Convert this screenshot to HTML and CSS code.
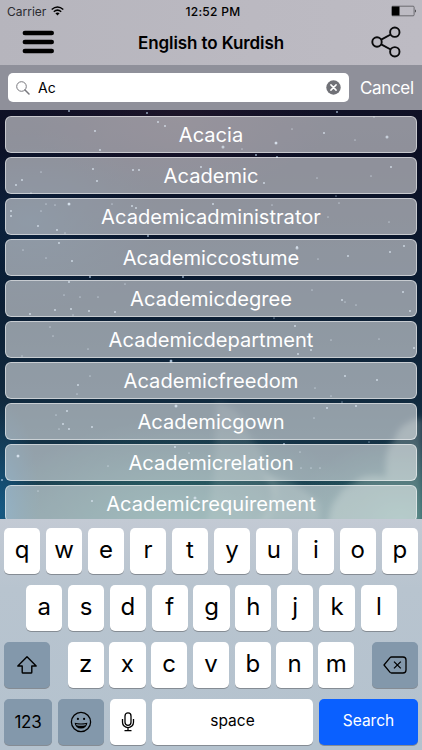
FILE: index.html
```
<!DOCTYPE html>
<html lang="en">
<head>
<meta charset="utf-8">
<title>English to Kurdish</title>
<link rel="stylesheet" href="styles.css">
</head>
<body>
<div class="phone">
  <svg class="sky" viewBox="0 0 422 750" aria-hidden="true">
    <defs>
      <linearGradient id="night" x1="0" y1="0" x2="0" y2="1">
        <stop offset="0" stop-color="#191629"/><stop offset=".2" stop-color="#0c0f24"/>
        <stop offset=".36" stop-color="#0a1a30"/><stop offset=".52" stop-color="#10283d"/>
        <stop offset=".7" stop-color="#1c4253"/><stop offset="1" stop-color="#1f5a66"/>
      </linearGradient>
      <radialGradient id="blue"><stop offset="0" stop-color="#116095" stop-opacity=".75"/><stop offset="1" stop-color="#10507e" stop-opacity="0"/></radialGradient>
      <radialGradient id="plum"><stop offset="0" stop-color="#2c1a2c" stop-opacity=".5"/><stop offset="1" stop-color="#2a1530" stop-opacity="0"/></radialGradient>
      <radialGradient id="teal"><stop offset="0" stop-color="#438f84" stop-opacity=".6"/><stop offset="1" stop-color="#438f84" stop-opacity="0"/></radialGradient>
      <filter id="soft" x="-20%" y="-20%" width="140%" height="140%"><feGaussianBlur stdDeviation="3"/></filter>
    </defs>
    <rect width="422" height="750" fill="url(#night)"/>
    <ellipse cx="180" cy="120" rx="150" ry="75" fill="url(#plum)"/>
    <ellipse cx="30" cy="220" rx="130" ry="90" fill="url(#blue)" opacity=".25"/>
    <ellipse cx="0" cy="510" rx="40" ry="110" fill="url(#blue)"/>
    <ellipse cx="180" cy="530" rx="190" ry="110" fill="url(#teal)"/>
    <ellipse cx="400" cy="520" rx="110" ry="80" fill="url(#teal)"/>
    <g class="cloud" filter="url(#soft)">
      <path d="M216 402q26 6 30 26q4 12 14 20l8 26q12 8 8 22l-10 34h-60l8-60z" opacity=".12"/>
      <path d="M328 525q2-22 10-28q4-10 16-14q8-10 32-6q-2-30 8-36q4-14 14-18q8-6 14-4v106z" opacity=".28"/>
      <path d="M262 474q14 14 10 28l-12 20h60v-18q-22-24-58-30z" opacity=".18"/>
    </g>
    <path class="stars" d="M69 111h0M147 113h0M158 122h0M165 126h0M95 131h0M100 150h0M93 169h0M97 181h0M133 170h0M139 170h0M16 185h0M22 180h0M69 204h0M132 206h0M136 208h0M11 211h0M11 216h0M38 226h0M57 230h0M59 243h0M148 236h0M201 167h0M337 112h0M324 133h0M276 143h0M256 155h0M277 157h0M391 167h0M264 183h0M213 204h0M404 246h0M297 247h0M153 68h0M292 105h0M301 108h0M72 261h0M90 277h0M69 282h0M55 310h0M71 309h0M89 311h0M115 312h0M30 314h0M183 277h0M348 256h0M390 252h0M342 300h0M295 326h0M403 292h0M410 311h0M414 348h0M298 354h0M311 350h0M171 361h0M78 385h0M67 411h0M63 424h0M69 429h0M92 427h0M18 456h0M92 501h0M175 447h0M2 480h0M345 376h0M377 380h0M327 408h0M356 406h0M284 444h0"/>
    <path class="stars big" d="M223 147h0M276 143h0M387 137h0M69 204h0M171 361h0M18 456h0M195 498h0M297 248h0M176 406h0"/>
    <path class="stars dim" d="M374 117h0M292 129h0M355 140h0M242 149h0M317 178h0M371 176h0M336 196h0M339 203h0M272 205h0M328 217h0M389 222h0M112 204h0M46 204h0M55 205h0M41 211h0M65 233h0M41 172h0M31 193h0M90 376h0M77 394h0M56 415h0M59 429h0M108 466h0M38 491h0M189 453h0M176 406h0M315 388h0M331 396h0M342 402h0M314 418h0M369 442h0M300 452h0M311 468h0M320 468h0M301 468h0M23 250h0M46 258h0M64 295h0M80 297h0M98 297h0M125 284h0M73 315h0M50 327h0M53 336h0M88 349h0M22 356h0M318 259h0M312 290h0M345 302h0M356 305h0M274 318h0M331 340h0M379 339h0"/>
  </svg>

  <header class="top">
    <div class="status">
      <div class="carrier"><span>Carrier</span>
        <svg width="13" height="10" viewBox="0 0 13 10"><g fill="none" stroke="#000" stroke-width="1.5"><path d="M.7 3.5Q6.500-1.500 12.300 3.500"/><path d="M2.800 5.700Q6.500 2.500 10.200 5.700"/></g><path d="M4.400 7.300Q6.500 5.700 8.600 7.300L6.500 9.600z"/></svg>
      </div>
      <div class="clock">12:52 PM</div>
      <svg class="battery" width="26" height="12" viewBox="0 0 26 12"><rect x=".7" y="1.200" width="22.400" height="9.600" rx="1" fill="none" stroke="#55555b" stroke-width=".8"/><path d="M1 1.500h7.500v9H1zM24 4.200q1.500 1.800 0 3.600z"/></svg>
    </div>
    <div class="nav">
      <svg class="menu" width="32" height="24" viewBox="0 0 32 24"><path d="M2.900 3h26.800M2.900 12h26.800M2.900 21h26.800" stroke="#000" stroke-width="4.600" stroke-linecap="round"/></svg>
      <h1>English to Kurdish</h1>
      <svg class="share" width="30" height="32" viewBox="0 0 30 32"><g fill="none" stroke="#0a0a0c" stroke-width="1.900"><circle cx="6" cy="16" r="4.700"/><circle cx="23.800" cy="6.200" r="4.700"/><circle cx="23.800" cy="25.800" r="4.700"/><path d="M10.200 13.700l9.500-5.200M10.200 18.300l9.500 5.200"/></g></svg>
    </div>
  </header>

  <div class="search">
    <div class="field">
      <svg width="14" height="14" viewBox="0 0 14 14"><g fill="none" stroke="#77777d"><circle cx="5.500" cy="5.500" r="4.800" stroke-width="1"/><path d="M9 9l4 4" stroke-width="1.500" stroke-linecap="round"/></g></svg>
      <span class="query">Ac</span>
      <svg width="15" height="15" viewBox="0 0 15 15"><circle cx="7.500" cy="7.500" r="7.200" fill="#707177"/><path d="M4.900 4.900l5.200 5.200M10.100 4.900l-5.200 5.200" stroke="#fff" stroke-width="1.500" stroke-linecap="round"/></svg>
    </div>
    <span class="cancel">Cancel</span>
  </div>

  <main class="list">
    <div class="word">Acacia</div>
    <div class="word">Academic</div>
    <div class="word">Academicadministrator</div>
    <div class="word">Academiccostume</div>
    <div class="word">Academicdegree</div>
    <div class="word">Academicdepartment</div>
    <div class="word">Academicfreedom</div>
    <div class="word">Academicgown</div>
    <div class="word">Academicrelation</div>
    <div class="word">Academicrequirement</div>
  </main>

  <div class="keyboard">
    <div class="keys"><b>q</b><b>w</b><b>e</b><b>r</b><b>t</b><b>y</b><b>u</b><b>i</b><b>o</b><b>p</b></div>
    <div class="keys home"><b>a</b><b>s</b><b>d</b><b>f</b><b>g</b><b>h</b><b>j</b><b>k</b><b>l</b></div>
    <div class="keys lower">
      <b class="gray side"><svg width="22" height="20" viewBox="0 0 22 20"><path d="M11 1.800L1.800 11h4.400v6.200q0 .8.800.8h8q.8 0 .8-.8V11h4.400z" fill="none" stroke="#000" stroke-width="1.400" stroke-linejoin="round"/></svg></b>
      <div class="keys letters"><b>z</b><b>x</b><b>c</b><b>v</b><b>b</b><b>n</b><b>m</b></div>
      <b class="gray side"><svg width="24" height="18" viewBox="0 0 24 18"><g fill="none" stroke="#000" stroke-width="1.300" stroke-linejoin="round"><path d="M8.500 1h11.500q3 0 3 3v10q0 3-3 3H8.500q-.8 0-1.400-.6L1 9l6.100-7.400q.6-.6 1.400-.6z"/><path d="M11 5.600l6.800 6.800M17.800 5.600L11 12.400"/></g></svg></b>
    </div>
    <div class="keys bottom">
      <b class="gray num">123</b>
      <b class="gray emoji"><svg width="22" height="22" viewBox="0 0 22 22"><circle cx="11" cy="11" r="9.600" fill="none" stroke="#000" stroke-width="1.300"/><circle cx="7.900" cy="7.900" r="1.100"/><circle cx="14.100" cy="7.900" r="1.100"/><path d="M4.600 11.700q6.400 1.400 12.800 0-.8 5.800-6.400 5.800t-6.400-5.800z"/><path d="M6 13q5 1.200 10 0l-.6 1.300q-4.400 1-8.800 0z" fill="#8398ab"/></svg></b>
      <b class="mic"><svg width="14" height="20" viewBox="0 0 14 20"><g fill="none" stroke="#000" stroke-width="1.300"><rect x="4" y=".9" width="6" height="12.400" rx="3"/><path d="M1.500 7v3.300a5.500 5.300 0 0 0 11 0V7M7 15.600v3M3.500 18.700h7"/></g></svg></b>
      <b class="space">space</b>
      <b class="go">Search</b>
    </div>
  </div>
</div>
</body>
</html>
```
FILE: styles.css
```
* { box-sizing: border-box; }
body { margin: 0; font-family: Inter, "Liberation Sans", sans-serif; }
.phone { position: relative; width: 422px; height: 750px; overflow: hidden; display: flex; flex-direction: column; }
.sky { position: absolute; inset: 0; width: 422px; height: 750px; z-index: -1; }
.stars { fill: none; stroke: #b9d2ea; stroke-width: 2; stroke-linecap: round; opacity: .75; }
.stars.big { stroke-width: 3; opacity: .7; }
.stars.dim { stroke-width: 1.7; opacity: .5; }
.cloud { fill: #d5e2d8; }

.top { height: 65px; flex: none; background: linear-gradient(90deg, #b6b5bd, #bbb9c1 60%, #bdbbc3); color: #000; }
.status { height: 21px; display: grid; grid-template-columns: 1fr auto 1fr; align-items: center; padding: 1px 5px 0 7px; }
.carrier { display: flex; align-items: center; gap: 5px; font-size: 12px; color: #2b2b30; }
.clock { font-size: 12px; font-weight: 500; letter-spacing: .3px; padding-left: 2px; }
.battery { justify-self: end; }
.nav { height: 44px; display: grid; grid-template-columns: 32px 1fr 30px; align-items: center; padding: 0 21px 2px 22px; }
.nav h1 { margin: 2px 3px 0 0; font-size: 17px; font-weight: 600; letter-spacing: -.1px; text-align: center; }

.search { height: 45px; flex: none; display: flex; align-items: center; background: #8f909a; padding: 0 8px; color: #fff; }
.field { width: 341px; height: 29px; background: #fff; border-radius: 5px; display: flex; align-items: center; padding: 0 8px; }
.query { flex: 1; margin-left: 8px; color: #000; font-size: 14px; }
.cancel { margin-left: 11px; font-size: 17px; letter-spacing: -.35px; }

.list { height: 409px; flex: none; overflow: hidden; padding: 6px 5px 0; display: flex; flex-direction: column; gap: 4px; }
.word { height: 37px; flex: none; border: 1px solid rgba(255,255,255,.5); border-radius: 6px; background: rgba(255,255,255,.54); color: #fff; font-size: 20.100px; line-height: 37px; text-align: center; }

.keyboard { height: 231px; flex: none; padding: 9px 4px 5px; background: linear-gradient(#c3cad4, #b8c4cf 30%, #b4c2ce); display: flex; flex-direction: column; gap: 11px; }
.keys { display: flex; height: 46px; gap: 5.600px; }
.keys b { flex: 1; height: 46px; border-radius: 5px; background: #fff; box-shadow: 0 1px 0 #858c94; font-weight: 400; font-size: 24px; display: flex; align-items: center; justify-content: center; padding-bottom: 4px; }
.home { padding: 0 21px 0 22px; }
.lower { justify-content: space-between; gap: 0; }
.lower .letters { width: 287px; }
.keys .gray { background: #8398ab; }
.keys .side { flex: 0 0 46px; padding: 0; }
.bottom { gap: 6px; }
.keys .num { flex: 0 0 48px; font-size: 17px; padding: 0; letter-spacing: -.2px; }
.keys .emoji { flex: 0 0 46px; padding: 0; }
.keys .mic { flex: 0 0 36px; padding: 0; }
.keys .space { font-size: 15.500px; }
.keys .go { flex: 0 0 99px; font-size: 15.500px; color: #fff; background: #0a60ff; }
```
